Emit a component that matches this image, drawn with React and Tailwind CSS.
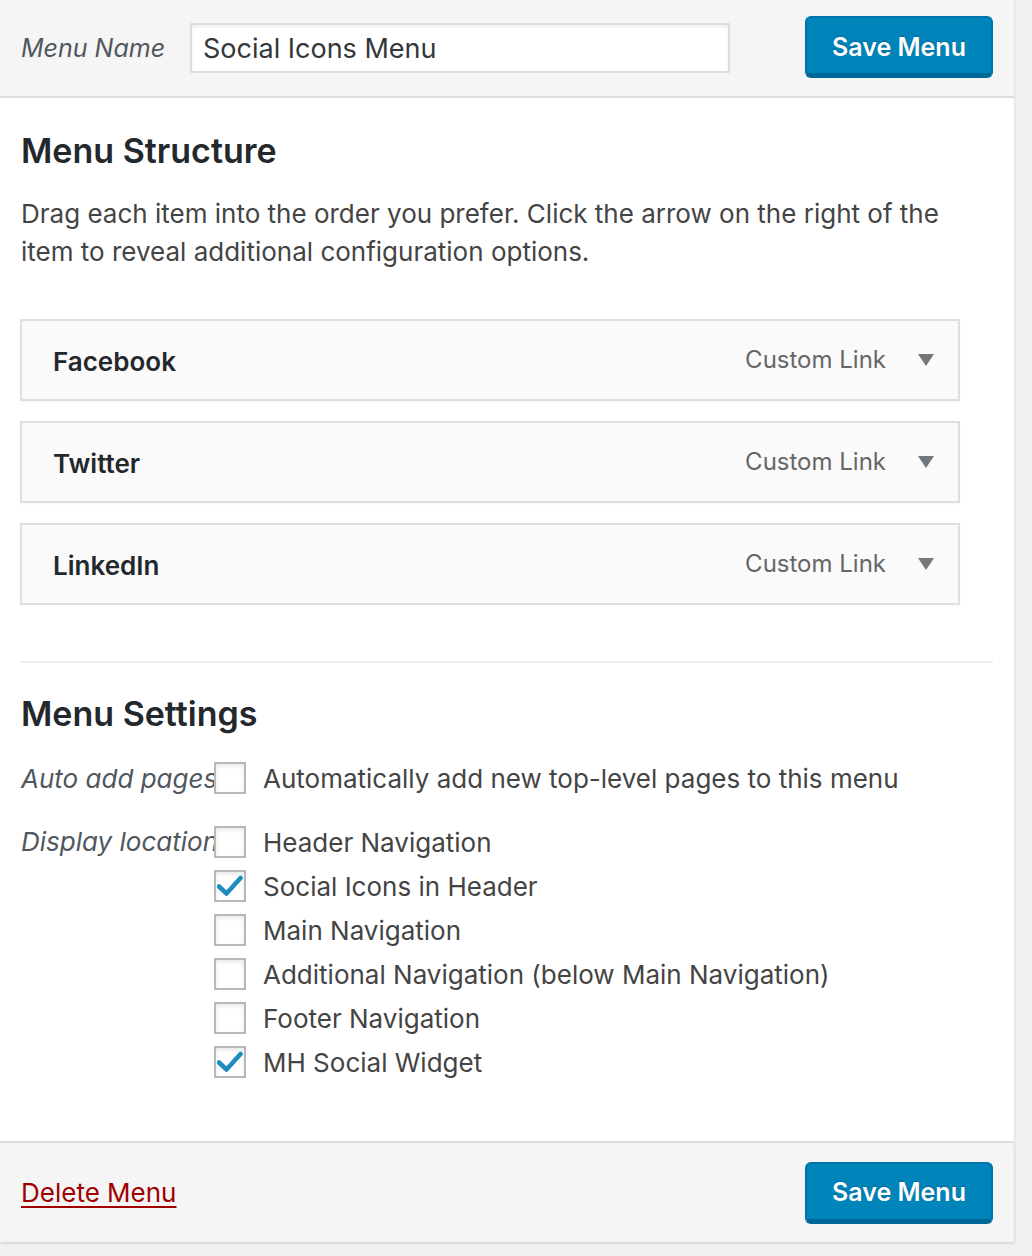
import React, { useState } from 'react';

const font = { fontFamily: 'Inter, "Noto Sans", sans-serif' };

const menuItems = ['Facebook', 'Twitter', 'LinkedIn'];

const locations = [
    { label: 'Header Navigation', checked: false },
    { label: 'Social Icons in Header', checked: true },
    { label: 'Main Navigation', checked: false },
    { label: 'Additional Navigation (below Main Navigation)', checked: false },
    { label: 'Footer Navigation', checked: false },
    { label: 'MH Social Widget', checked: true },
];

const Checkbox = ({ checked, onChange }) => (
    <button
        type="button"
        onClick={onChange}
        className="w-[32px] h-[32px] shrink-0 bg-white border-2 border-[#b4b9be] shadow-[inset_0_2px_4px_rgba(0,0,0,0.1)] flex items-center justify-center"
    >
        {checked && (
            <svg width="26" height="22" viewBox="0 0 26 22">
                <path d="M2 11.5 L9.5 18.5 L23.5 3" fill="none" stroke="#1e8cbe" strokeWidth="4.5" strokeLinecap="round" strokeLinejoin="round" />
            </svg>
        )}
    </button>
);

const SaveButton = () => (
    <button className="w-[188px] h-[62px] rounded-[6px] bg-[#0085ba] border-2 border-[#0073aa] border-b-[5px] border-b-[#006799] text-white text-[25px] font-semibold pt-[4px] [text-shadow:0_-1px_2px_#006799]">
        Save Menu
    </button>
);

const App = () => {
    const [menuName, setMenuName] = useState('Social Icons Menu');
    const [autoAdd, setAutoAdd] = useState(false);
    const [locs, setLocs] = useState(locations);

    const toggleLoc = (i) => setLocs(locs.map((l, idx) => (idx === i ? { ...l, checked: !l.checked } : l)));

    return (
        <div className="min-h-screen w-[1032px] bg-[#f1f1f1]" style={font}>
            <div className="w-[1014px] shadow-[1px_1px_2px_rgba(0,0,0,0.08)]">

                {/* Header */}
                <div className="h-[98px] bg-[#f5f5f5] border-b-2 border-[#dddddd] flex items-center pl-[21px] pr-[21px]">
                    <span className="italic text-[25px] text-[#50575e] w-[169px] mt-[2px]">Menu Name</span>
                    <input
                        value={menuName}
                        onChange={(e) => setMenuName(e.target.value)}
                        className="w-[540px] h-[50px] bg-white border-2 border-[#dddddd] shadow-[inset_0_2px_4px_rgba(0,0,0,0.07)] px-[11px] text-[27px] text-[#32373c] outline-none"
                    />
                    <div className="ml-auto -mt-[2px]">
                        <SaveButton />
                    </div>
                </div>

                {/* Body */}
                <div className="bg-white pl-[21px] pr-[21px] pt-[33px] pb-[57px]">
                    <h3 className="text-[34px] leading-[40px] font-semibold text-[#23282d]">Menu Structure</h3>
                    <p className="mt-[24px] text-[26px] leading-[38px] text-[#444444] w-[960px]">
                        Drag each item into the order you prefer. Click the arrow on the right of the<br />
                        item to reveal additional configuration options.
                    </p>

                    <div className="mt-[48px] flex flex-col gap-[20px] w-[940px] -ml-[1px]">
                        {menuItems.map((item) => (
                            <div
                                key={item}
                                className="h-[82px] bg-[#fafafa] border-2 border-[#dfdfdf] shadow-[0_1px_2px_rgba(0,0,0,0.04)] flex items-center pl-[31px] pr-[24px]"
                            >
                                <span className="text-[26px] font-semibold text-[#23282d] mt-[3px]">{item}</span>
                                <span className="ml-auto text-[24px] text-[#666666]">Custom Link</span>
                                <svg width="16" height="12" viewBox="0 0 16 12" className="ml-[32px] mt-[-1px]">
                                    <path d="M0 0 L16 0 L8 12 Z" fill="#72777c" />
                                </svg>
                            </div>
                        ))}
                    </div>

                    <div className="mt-[56px] h-[2px] bg-[#eeeeee] w-[973px] -ml-[1px]" />

                    <h3 className="mt-[31px] text-[34px] leading-[40px] font-semibold text-[#23282d]">Menu Settings</h3>

                    <div className="mt-[22px] flex items-center h-[44px]">
                        <span className="italic text-[26px] text-[#50575e] w-[193px] whitespace-nowrap">Auto add pages</span>
                        <Checkbox checked={autoAdd} onChange={() => setAutoAdd(!autoAdd)} />
                        <span className="ml-[17px] text-[26px] text-[#444444]">Automatically add new top-level pages to this menu</span>
                    </div>

                    <div className="mt-[20px] flex items-start">
                        <span className="italic text-[26px] leading-[44px] text-[#50575e] w-[193px] whitespace-nowrap">Display location</span>
                        <div className="flex flex-col">
                            {locs.map((l, i) => (
                                <div key={l.label} className="flex items-center h-[44px]">
                                    <Checkbox checked={l.checked} onChange={() => toggleLoc(i)} />
                                    <span className="ml-[17px] text-[26px] text-[#444444]">{l.label}</span>
                                </div>
                            ))}
                        </div>
                    </div>
                </div>

                {/* Footer */}
                <div className="h-[101px] bg-[#f5f5f5] border-t-2 border-[#dddddd] flex items-center pl-[21px] pr-[21px] shadow-[0_2px_3px_rgba(0,0,0,0.06)]">
                    <a href="#" className="text-[26px] text-[#a00000] underline underline-offset-[4px]">Delete Menu</a>
                    <div className="ml-auto">
                        <SaveButton />
                    </div>
                </div>
            </div>
        </div>
    );
};

export default App;
